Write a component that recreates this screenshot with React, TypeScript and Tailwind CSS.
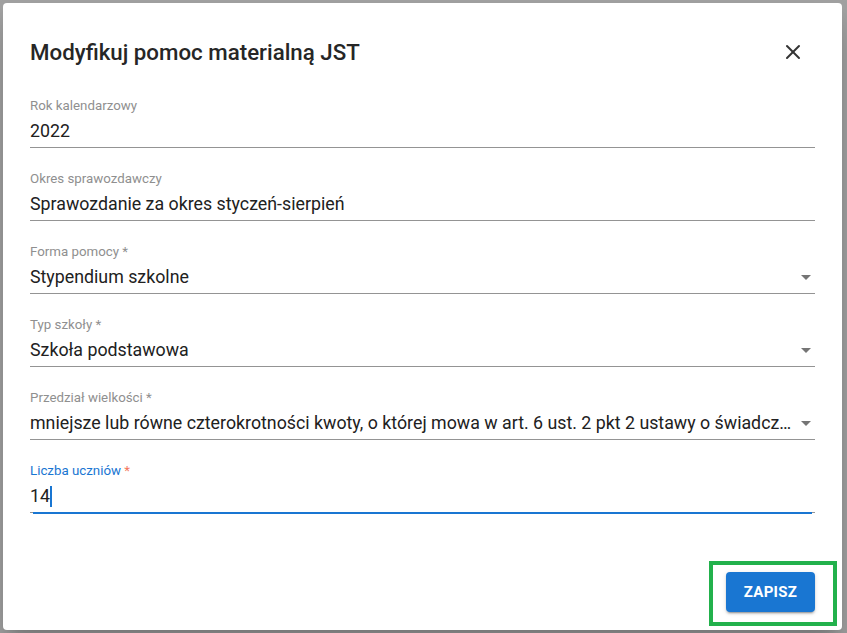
import { X } from 'lucide-react';

type FieldProps = {
  label: string;
  value: string;
  required?: boolean;
  select?: boolean;
};

function ArrowDropDown() {
  return (
    <svg viewBox="0 0 24 24" className="-mr-[3px] h-6 w-6 shrink-0 fill-[#757575]">
      <path d="M7 10l5 5 5-5z" />
    </svg>
  );
}

function Field({ label, value, required, select }: FieldProps) {
  return (
    <div className="flex flex-col">
      <div className="h-4 text-[13.3px] leading-4 text-[#8f8f8f]">
        {label}
        {required && ' *'}
      </div>
      <div className="mt-[5px] flex items-center border-b border-[#949494] pb-[4px]">
        <span className="flex-1 truncate text-[17.8px] leading-6 text-[#212121]">{value}</span>
        {select && <ArrowDropDown />}
      </div>
    </div>
  );
}

export default function App() {
  return (
    <div className="h-[633px] w-[847px] overflow-hidden bg-[#a2a2a2] font-['Roboto',sans-serif]">
      <div className="ml-[3px] mt-[3px] flex h-[627px] w-[839px] flex-col rounded bg-white shadow-[0_11px_15px_-7px_rgba(0,0,0,0.2),0_24px_38px_3px_rgba(0,0,0,0.14)]">
        <div className="flex items-center pl-[27px] pr-[37px] pt-[33px]">
          <h2 className="flex-1 text-[22.3px] font-medium leading-8 text-[#262626]">
            Modyfikuj pomoc materialną JST
          </h2>
          <X className="h-6 w-6 text-[#333]" strokeWidth={2} />
        </div>

        <div className="mt-[30px] flex flex-col gap-[23px] px-[27px]">
          <Field label="Rok kalendarzowy" value="2022" />
          <Field label="Okres sprawozdawczy" value="Sprawozdanie za okres styczeń-sierpień" />
          <Field label="Forma pomocy" value="Stypendium szkolne" required select />
          <Field label="Typ szkoły" value="Szkoła podstawowa" required select />
          <Field
            label="Przedział wielkości"
            value="mniejsze lub równe czterokrotności kwoty, o której mowa w art. 6 ust. 2 pkt 2 ustawy o świadczeniach rodzinnych"
            required
            select
          />
          <div className="flex flex-col">
            <div className="h-4 text-[13.3px] leading-4 text-[#1976d2]">
              Liczba uczniów <span className="text-[#f4775e]">*</span>
            </div>
            <div className="mt-[5px] flex items-center border-b border-[#949494] pb-[4px]">
              <span className="text-[17.8px] leading-6 text-[#212121]">14</span>
              <span className="h-[21px] w-[2px] bg-[#1976d2]" />
            </div>
            <div className="mx-[3px] -mt-[1px] h-[2px] bg-[#1976d2]" />
          </div>
        </div>

        <div className="mt-auto mb-[4px] flex justify-end pr-[5px]">
          <div className="border-4 border-[#22b14c] pb-[10px] pl-[13px] pr-[18px] pt-[7px]">
            <button className="h-[40px] w-[89px] rounded bg-[#1976d2] text-[15px] font-bold tracking-[0.3px] text-white shadow-[0_3px_1px_-2px_rgba(0,0,0,0.2),0_2px_2px_0_rgba(0,0,0,0.14),0_1px_5px_0_rgba(0,0,0,0.12)]">
              ZAPISZ
            </button>
          </div>
        </div>
      </div>
      <div className="pl-[472px] text-[18px] leading-6 text-[#333]">
        mniejsze lub równe czterokrotności kwoty, o której
      </div>
    </div>
  );
}
